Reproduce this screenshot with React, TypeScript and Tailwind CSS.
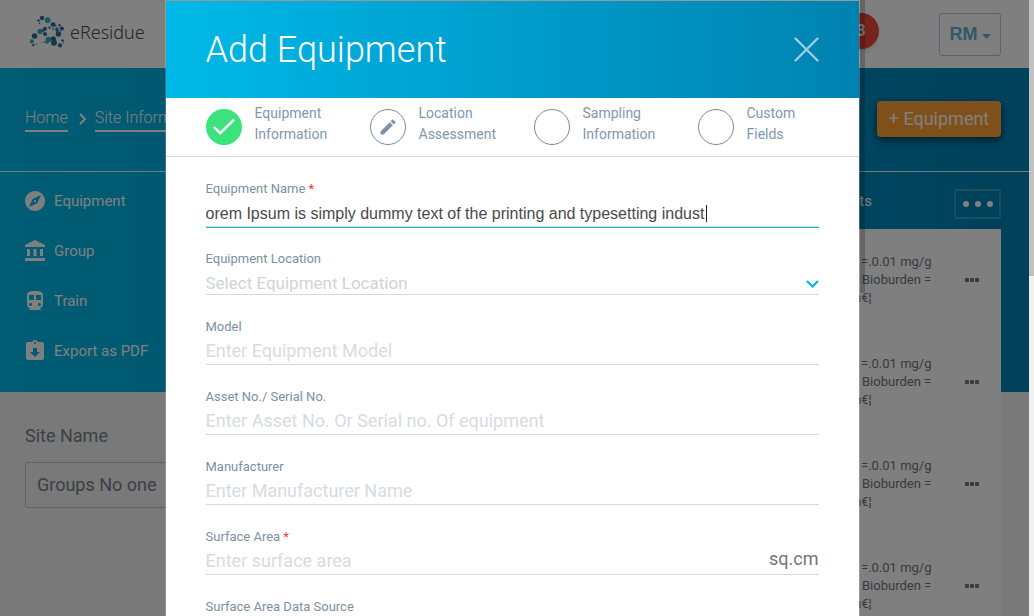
import React from "react";
import {
  MdAccountBalance,
  MdAssignmentReturned,
  MdDirectionsSubway,
  MdEdit,
  MdExplore,
} from "react-icons/md";

const navItems = [
  { label: "Equipment", Icon: MdExplore },
  { label: "Group", Icon: MdAccountBalance },
  { label: "Train", Icon: MdDirectionsSubway },
  { label: "Export as PDF", Icon: MdAssignmentReturned },
];

const logoDots: [number, number, number, number][] = [
  [12, 2, 2.2, 0], [17.6, 4.2, 2.9, 1], [8.5, 4.5, 1.2, 0], [9.6, 7.4, 0.8, 0],
  [23, 8.6, 2.4, 0], [29.6, 9.2, 1.2, 0], [32, 12.6, 2, 0], [27, 13, 2, 1],
  [30.6, 14.6, 0.9, 1], [25.6, 9.6, 0.9, 0], [15, 12.8, 2, 0], [10, 15.4, 2.6, 1],
  [19.6, 11.6, 1.2, 0], [13, 14.6, 1.4, 0], [23, 13, 0.9, 0], [4.6, 20, 2.8, 0],
  [15, 18, 2, 0], [28.4, 18, 2.7, 0], [27, 14.6, 1.4, 0], [1.8, 25.4, 2.1, 1],
  [3.4, 29, 1.2, 0], [6.6, 28, 0.8, 1], [18.4, 23.6, 2.8, 1], [23.4, 22.8, 2.5, 0],
  [14.6, 26, 1, 1], [12, 26.6, 0.7, 1], [17, 26.2, 1.6, 1], [24, 26.8, 3, 0],
  [30, 29.4, 2.1, 0], [32.6, 24.6, 1.3, 0], [33.4, 27, 0.8, 1],
];

const steps = [
  { lines: ["Equipment", "Information"], state: "done" },
  { lines: ["Location", "Assessment"], state: "current" },
  { lines: ["Sampling", "Information"], state: "todo" },
  { lines: ["Custom", "Fields"], state: "todo" },
];

function Logo() {
  return (
    <a href="#" className="flex items-center gap-[6px] pb-1 text-lg font-light text-[#4a4a4a]">
      <svg width="34" height="32" viewBox="0 0 34 32" aria-hidden="true">
        {logoDots.map(([cx, cy, r, tone], i) => (
          <circle key={i} cx={cx} cy={cy} r={r} fill={tone ? "#2fb0c4" : "#33689c"} />
        ))}
      </svg>
      <span className="font-['Noto_Sans',sans-serif]">eResidue</span>
    </a>
  );
}

function StepMark({ state }: { state: string }) {
  if (state === "done") {
    return (
      <span className="mt-[6px] flex size-9 shrink-0 items-center justify-center rounded-full bg-[#3ce37c]">
        <svg width="24" height="20" viewBox="0 0 24 20" fill="none" stroke="white" strokeWidth="2.4" aria-hidden="true">
          <path d="M2 10 L8.2 16.2 L22 2.6" />
        </svg>
      </span>
    );
  }
  return (
    <span className="mt-[6px] flex size-9 shrink-0 items-center justify-center rounded-full border border-[#76879a] text-[#7b92a9]">
      {state === "current" && <MdEdit size={20} />}
    </span>
  );
}

function Field({
  id,
  label,
  placeholder,
  required,
  unit,
}: {
  id: string;
  label: string;
  placeholder?: string;
  required?: boolean;
  unit?: string;
}) {
  return (
    <div className="flex flex-col">
      <FieldLabel id={id} label={label} required={required} />
      <div className="flex h-7 items-center border-b border-[#d3dae0]">
        <input
          id={id}
          placeholder={placeholder}
          className="h-[27px] min-w-0 flex-1 bg-transparent text-lg text-[#4a4a4a] outline-none placeholder:text-[#d6dce2]"
        />
        {unit && <span className="pb-1 text-lg leading-6 text-[#757575]">{unit}</span>}
      </div>
    </div>
  );
}

function FieldLabel({ id, label, required }: { id: string; label: string; required?: boolean }) {
  return (
    <label htmlFor={id} className="text-[13px] leading-5 text-[#7d8fa1]">
      {label}
      {required && <span className="text-[#ee3b33]"> *</span>}
    </label>
  );
}

function Page() {
  return (
    <div className="flex min-h-full flex-col bg-[#f2f2f2]">
      <header className="flex h-[68px] items-center justify-between bg-white pr-7 pl-[30px]">
        <Logo />
        <div className="flex items-start gap-[60px]">
          <span className="flex size-9 items-center justify-center rounded-full bg-[#f04438] text-base font-bold text-white shadow-md">
            3
          </span>
          <button className="flex h-[43px] w-[62px] items-center justify-center gap-1 rounded-[3px] border border-[#b8c6d8] font-['Liberation_Sans',sans-serif] text-lg font-bold text-[#62b5cc]">
            RM
            <svg width="9" height="5" viewBox="0 0 9 5" fill="currentColor" aria-hidden="true" className="mt-1">
              <path d="M0 0h9L4.500 5z" />
            </svg>
          </button>
        </div>
      </header>

      <main className="flex flex-1 flex-col bg-linear-to-r from-[#00bbea] to-[#0082b7] bg-[length:100%_324px] bg-no-repeat">
        <div className="flex h-[104px] items-center justify-between border-b border-white/90 pr-7 pb-[2px] pl-[25px]">
          <nav className="flex items-center gap-2 text-base leading-6 font-light text-white">
            <a href="#" className="border-b-2 border-white">Home</a>
            <svg width="8" height="12" viewBox="0 0 8 12" fill="none" stroke="currentColor" strokeWidth="2" aria-hidden="true" className="ml-[3px]">
              <path d="M1 1l5 5-5 5" />
            </svg>
            <a href="#" className="border-b-2 border-white">Site Information</a>
          </nav>
          <button className="h-9 w-[124px] rounded bg-[#ffa033] text-lg text-white shadow-[0_3px_8px_rgba(0,0,0,0.6)]">
            + Equipment
          </button>
        </div>

        <div className="flex flex-1 justify-between pr-7 pl-[25px]">
          <aside className="flex w-[240px] flex-col pt-1">
            {navItems.map(({ label, Icon }) => (
              <a key={label} href="#" className="flex h-[50px] items-center gap-[7px] text-[15px] text-white">
                <Icon size={24} className="-ml-0.5 shrink-0" />
                {label}
              </a>
            ))}
            <label htmlFor="site" className="mt-12 text-lg leading-6 text-[#75828f]">
              Site Name
            </label>
            <select
              id="site"
              className="mt-[14px] h-[46px] appearance-none rounded-[3px] border border-[#c4c4c4] pl-[11px] text-lg text-[#75828f]"
            >
              <option>Groups No one</option>
            </select>
          </aside>

          <section className="flex w-[420px] flex-col">
            <div className="flex h-[57px] items-center justify-end gap-[82px] pt-[2px] text-[15px] text-white">
              <span>ts</span>
              <button aria-label="More actions" className="mt-1 flex h-[30px] w-[47px] items-center justify-center gap-[6px] rounded-[2px] border-2 border-[#3a9cbb]">
                <span className="size-[6px] rounded-full bg-white" />
                <span className="size-[6px] rounded-full bg-white" />
                <span className="size-[6px] rounded-full bg-white" />
              </button>
            </div>
            <div className="flex-1 bg-white pt-6">
              {[0, 1, 2, 3].map((row) => (
                <div key={row} className="flex h-[102px] items-start justify-end pr-[22px] text-[13px] leading-[18px] text-[#6b7784]">
                  <p className="w-[111px]">
                    <span className="block pl-[7px]">=.0.01 mg/g</span>
                    <span className="block pl-2">Bioburden =</span>
                    <span className="block">n€¦</span>
                  </p>
                  <button aria-label="Row actions" className="mt-[25px] flex gap-px">
                    <span className="size-1 rounded-[1px] bg-[#6b7784]" />
                    <span className="size-1 rounded-[1px] bg-[#6b7784]" />
                    <span className="size-1 rounded-[1px] bg-[#6b7784]" />
                  </button>
                </div>
              ))}
            </div>
          </section>
        </div>
      </main>
    </div>
  );
}

function EquipmentDialog() {
  return (
    <div role="dialog" aria-labelledby="dialog-title" className="w-full max-w-[695px] border border-white/20 bg-white bg-clip-padding">
      <div className="flex h-[97px] items-center justify-between bg-linear-to-r from-[#00b9e8] to-[#0082b0] px-10">
        <h1 id="dialog-title" className="text-4xl font-light text-white">Add Equipment</h1>
        <button aria-label="Close" className="text-white/60">
          <svg width="25" height="25" viewBox="0 0 25 25" fill="none" stroke="currentColor" strokeWidth="2.400" strokeLinecap="round" aria-hidden="true">
            <path d="M1.500 1.500l22 22M23.500 1.500l-22 22" />
          </svg>
        </button>
      </div>

      <ol className="flex h-[59px] border-b border-[#d3dae0] pt-[5px] pl-10">
        {steps.map(({ lines, state }) => (
          <li key={lines.join(" ")} className="flex w-[164px] shrink-0 gap-[13px] text-sm leading-[21px] text-[#7f97ae] last:w-auto">
            <StepMark state={state} />
            <span>
              {lines[0]}
              <br />
              {lines[1]}
            </span>
          </li>
        ))}
      </ol>

      <form className="flex flex-col gap-[22px] px-10 pt-[22px]">
        <div className="flex flex-col">
          <FieldLabel id="name" label="Equipment Name" required />
          <div className="relative flex h-7 border-b border-[#d3dae0] shadow-[0_1px_0_#14b4dc]">
            <input
              id="name"
              defaultValue="orem Ipsum is simply dummy text of the printing and typesetting indust"
              className="min-w-0 flex-1 bg-transparent pt-[2px] font-['Liberation_Sans',sans-serif] text-base text-[#4a4a4a] outline-none"
            />
            <span className="absolute top-[6px] left-[500px] h-[17px] w-px bg-[#222222]" />
          </div>
        </div>

        <div className="flex flex-col">
          <FieldLabel id="location" label="Equipment Location" />
          <div className="flex h-[26px] items-center border-b border-[#d3dae0]">
            <select id="location" className="h-[25px] min-w-0 flex-1 appearance-none bg-transparent pt-[2px] text-[17px] text-[#cdd4da] outline-none">
              <option>Select Equipment Location</option>
            </select>
            <svg width="13" height="8" viewBox="0 0 13 8" fill="none" stroke="#00b7e6" strokeWidth="2.200" aria-hidden="true" className="mt-1">
              <path d="M1 1l5.500 5.500L12 1" />
            </svg>
          </div>
        </div>

        <Field id="model" label="Model" placeholder="Enter Equipment Model" />
        <Field id="asset" label="Asset No./ Serial No." placeholder="Enter Asset No. Or Serial no. Of equipment" />
        <Field id="manufacturer" label="Manufacturer" placeholder="Enter Manufacturer Name" />
        <Field id="area" label="Surface Area" placeholder="Enter surface area" required unit="sq.cm" />
        <Field id="source" label="Surface Area Data Source" />
      </form>
    </div>
  );
}

export default function App() {
  return (
    <div className="relative flex h-screen overflow-hidden font-[Roboto,sans-serif]">
      <div className="h-full min-w-0 flex-1 overflow-hidden">
        <Page />
      </div>
      <div className="w-[5px] bg-[#f1f1f1]">
        <div className="h-[276px] bg-[#c1c1c1]" />
      </div>
      <div className="absolute inset-y-0 right-[5px] left-0 flex items-start justify-center overflow-hidden bg-black/50">
        <EquipmentDialog />
        <div className="h-[293px] w-[5px] shrink-0 bg-black/20" />
      </div>
    </div>
  );
}
